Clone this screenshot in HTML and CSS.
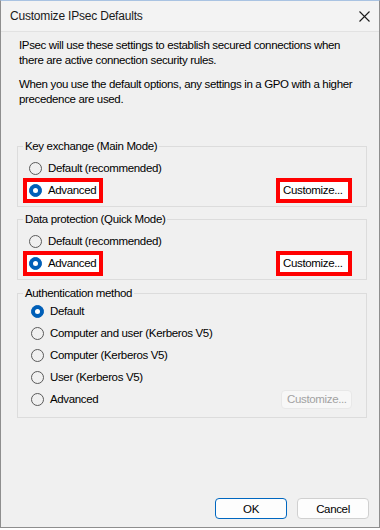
FILE: index.html
```html
<!DOCTYPE html>
<html>
<head>
<meta charset="utf-8">
<link rel="stylesheet" href="styles.css">
</head>
<body>
<div class="window">
  <div class="titlebar">
    <span class="title">Customize IPsec Defaults</span>
    <span class="close"><svg width="11" height="11" viewBox="0 0 11 11"><path d="M0.5 0.5 L10.5 10.5 M10.5 0.5 L0.5 10.5" stroke="#1a1a1a" stroke-width="1.1" fill="none"/></svg></span>
  </div>
  <div class="content">
    <p class="intro">IPsec will use these settings to establish secured connections when<br>there are active connection security rules.</p>
    <p class="intro second">When you use the default options, any settings in a GPO with a higher<br>precedence are used.</p>

    <div class="group g1">
      <div class="legend">Key exchange (Main Mode)</div>
      <div class="row"><span class="opt"><span class="radio"></span>Default (recommended)</span></div>
      <div class="row"><span class="opt hl"><span class="radio on"></span>Advanced</span><span class="cust hl">Customize...</span></div>
    </div>

    <div class="group g2">
      <div class="legend">Data protection (Quick Mode)</div>
      <div class="row"><span class="opt"><span class="radio"></span>Default (recommended)</span></div>
      <div class="row"><span class="opt hl"><span class="radio on"></span>Advanced</span><span class="cust hl">Customize...</span></div>
    </div>

    <div class="group g3">
      <div class="legend">Authentication method</div>
      <div class="row"><span class="opt"><span class="radio on"></span>Default</span></div>
      <div class="row"><span class="opt"><span class="radio"></span>Computer and user (Kerberos V5)</span></div>
      <div class="row"><span class="opt"><span class="radio"></span>Computer (Kerberos V5)</span></div>
      <div class="row"><span class="opt"><span class="radio"></span>User (Kerberos V5)</span></div>
      <div class="row"><span class="opt"><span class="radio"></span>Advanced</span><span class="cust-disabled">Customize...</span></div>
    </div>

    <div class="actions">
      <button class="btn primary">OK</button>
      <button class="btn">Cancel</button>
    </div>
  </div>
</div>
</body>
</html>
```
FILE: styles.css
```css
* { box-sizing: border-box; }
html, body { margin: 0; padding: 0; }
body {
  width: 380px;
  height: 530px;
  background: #ffffff;
  font-family: "Liberation Sans", Arial, sans-serif;
  font-size: 11.5px;
  letter-spacing: -0.35px;
  color: #000;
  overflow: hidden;
}
.window {
  width: 380px;
  height: 528px;
  border: 1px solid #8e8e8e;
  border-top-color: #a9c3e2;
  background: #f0f0f0;
  display: flex;
  flex-direction: column;
}
.titlebar {
  flex: none;
  height: 31px;
  background: #f3f3f3;
  border-bottom: 1px solid #e2e2e2;
  display: flex;
  align-items: center;
  justify-content: space-between;
  padding: 0 9px 0 9px;
}
.title {
  color: #1a1a1a;
  white-space: nowrap;
  font-size: 12px;
  letter-spacing: -0.2px;
}
.close { display: flex; width: 11px; height: 11px; }
.content {
  flex: 1;
  display: flex;
  flex-direction: column;
  padding: 6px 10px 8px 16px;
}
.intro {
  margin: 0;
  padding-left: 2px;
  line-height: 15px;
  white-space: nowrap;
}
.second { margin-top: 9px; }
.group {
  border: 1px solid #dcdcdc;
  display: flex;
  flex-direction: column;
  margin-right: 2px;
}
.legend {
  align-self: flex-start;
  margin: -8px 0 3px 5px;
  padding: 0 2px;
  line-height: 15px;
  background: #f0f0f0;
  white-space: nowrap;
}
.g1 { margin-top: 39px; padding-bottom: 5px; }
.g2 { margin-top: 12px; padding-bottom: 5px; }
.g3 { margin-top: 13px; padding-bottom: 7px; }
.g3 .legend { margin-bottom: -1px; }
.row {
  height: 22px;
  display: flex;
  align-items: center;
  justify-content: space-between;
  padding: 0 18px 0 9px;
}
.g3 .row { padding: 0 14px 0 11px; }
.opt {
  display: inline-flex;
  align-items: center;
  height: 17px;
  padding: 0 3px 0 2px;
  white-space: nowrap;
}
.radio {
  flex: none;
  width: 13px;
  height: 13px;
  border-radius: 50%;
  border: 1px solid #5a5a5a;
  margin-right: 6px;
  display: flex;
  align-items: center;
  justify-content: center;
}
.radio.on { background: #005fb8; border-color: #005fb8; }
.radio.on::after {
  content: "";
  width: 5px;
  height: 5px;
  border-radius: 50%;
  background: #fff;
}
.hl {
  background: #fff;
  outline: 4px solid #ff0000;
}
.cust {
  display: inline-flex;
  align-items: center;
  height: 17px;
  width: 68px;
  padding-left: 3px;
  white-space: nowrap;
}
.cust-disabled {
  display: inline-flex;
  align-items: center;
  height: 19px;
  width: 71px;
  padding-left: 5px;
  border: 1px solid #e8e8e8;
  border-radius: 4px;
  background: #f7f7f7;
  color: #a2a2a2;
  white-space: nowrap;
}
.actions {
  margin-top: auto;
  display: flex;
  justify-content: flex-end;
  gap: 10px;
}
.btn {
  width: 72px;
  height: 21px;
  padding: 0;
  font: inherit;
  letter-spacing: inherit;
  color: #000;
  background: #fdfdfd;
  border: 1px solid #d0d0d0;
  border-radius: 4px;
}
.btn.primary { border-color: #0067c0; }
```
